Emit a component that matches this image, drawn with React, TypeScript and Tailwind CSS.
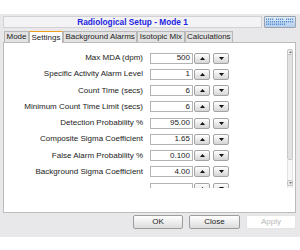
import React from 'react'

const rows = [
  { label: 'Max MDA (dpm)', value: '500' },
  { label: 'Specific Activity Alarm Level', value: '1' },
  { label: 'Count Time (secs)', value: '6' },
  { label: 'Minimum Count Time Limit (secs)', value: '6' },
  { label: 'Detection Probability %', value: '95.00' },
  { label: 'Composite Sigma Coefficient', value: '1.65' },
  { label: 'False Alarm Probability %', value: '0.100' },
  { label: 'Background Sigma Coefficient', value: '4.00' },
  { label: '', value: '' },
]

const tabs = ['Mode', 'Settings', 'Background Alarms', 'Isotopic Mix', 'Calculations']

function Arrow({ up }: { up?: boolean }) {
  return (
    <svg width="5" height="3" viewBox="0 0 5 3">
      <path d={up ? 'M0 3 L2.5 0 L5 3 Z' : 'M0 0 L2.5 3 L5 0 Z'} fill="#111" />
    </svg>
  )
}

function SpinButton({ up }: { up?: boolean }) {
  return (
    <div className="flex h-[11px] w-[16px] items-center justify-center rounded-[2px] border border-[#a4a4a4] bg-gradient-to-b from-white to-[#d6d6d6]">
      <Arrow up={up} />
    </div>
  )
}

function Row({ label, value }: { label: string; value: string }) {
  return (
    <div className="flex h-[16.25px] shrink-0 items-center">
      <div className="w-[139px] text-right leading-none">{label}</div>
      <div className="ml-[7px] flex h-[11px] w-[43px] items-center justify-end border border-[#b4b4b4] bg-white pr-[2px] leading-none">
        {value}
      </div>
      <div className="ml-[1px]">
        <SpinButton up />
      </div>
      <div className="ml-[3px]">
        <SpinButton />
      </div>
    </div>
  )
}

function Scrollbar() {
  return (
    <div className="mr-[2px] mt-[3px] flex h-[139px] w-[6px] flex-col">
      <div className="flex h-[6px] items-center justify-center rounded-t-[2px] border border-[#c4c4c4] bg-[#ececec]">
        <svg width="3" height="2" viewBox="0 0 3 2">
          <path d="M0 2 L1.5 0 L3 2 Z" fill="#777" />
        </svg>
      </div>
      <div className="h-[105px] rounded-b-[2px] border border-t-0 border-[#c8c8c8] bg-[#e2e2e2]" />
      <div className="flex-1 border-x border-[#e2e2e2] bg-[#f7f7f7]" />
      <div className="flex h-[6px] items-center justify-center rounded-[1px] border border-[#c4c4c4] bg-[#ececec]">
        <svg width="3" height="2" viewBox="0 0 3 2">
          <path d="M0 0 L1.5 2 L3 0 Z" fill="#777" />
        </svg>
      </div>
      <div className="h-[2px] border-x border-[#e2e2e2] bg-[#f7f7f7]" />
    </div>
  )
}

// little dotted badge in the title bar's corner
function Badge() {
  const dots = []
  for (let r = 0; r < 3; r++) {
    for (let c = 0; c < 14; c++) {
      if ((r === 2 && c > 9) || (r === 0 && c % 5 === 4)) continue
      dots.push(<rect key={r + '-' + c} x={1 + c * 2} y={1.5 + r * 2.5} width="1.2" height="1.5" fill="#5a8fd4" />)
    }
  }
  return (
    <svg width="30" height="10" viewBox="0 0 30 10" className="block">
      {dots}
    </svg>
  )
}

export default function App() {
  return (
    <div
      className="flex h-[250px] w-[300px] flex-col bg-white text-[8px] text-[#222]"
      style={{ fontFamily: '"Liberation Sans", Arial, sans-serif' }}
    >
      <div className="h-[14px] shrink-0" />

      <div className="flex h-[223px] shrink-0 flex-col bg-[#e8e8eb] pl-[3px] pr-[4px]">
        {/* title bar */}
        <div className="mt-[2px] flex h-[12px] items-stretch">
          <div className="flex flex-1 items-center justify-center border border-[#d2d2d6] bg-[#f3f3f5] text-[8.3px] font-bold text-[#2424e2]">
            Radiological Setup - Mode 1
          </div>
          <div className="ml-[2px] w-[32px] rounded-[1px] border border-[#9aa4b0] bg-gradient-to-b from-[#e2ecf8] to-[#b4cfee]">
            <Badge />
          </div>
        </div>

        {/* tabs */}
        <div className="mt-[3px] flex h-[11px] items-end pl-[1px]">
          {tabs.map((t) => (
            <div
              key={t}
              className={
                t === 'Settings'
                  ? 'relative z-10 -mb-px flex h-[12px] items-center border border-b-0 border-[#b8b8b8] border-t-[#f0a020] bg-white px-[1.5px] leading-none'
                  : 'flex h-[11px] items-center border border-b-0 border-[#b8b8b8] bg-[#e2e2e2] px-[1.5px] leading-none'
              }
            >
              {t}
            </div>
          ))}
        </div>

        {/* panel */}
        <div className="flex h-[171px] flex-col border border-[#bcbcbc] bg-white">
          <div className="mt-[3px] flex h-[142px]">
            <div className="flex flex-1 flex-col overflow-hidden pt-[3.9px]">
              {rows.map((r, i) => (
                <Row key={i} label={r.label} value={r.value} />
              ))}
            </div>
            <Scrollbar />
          </div>
        </div>

        {/* buttons */}
        <div className="mt-[2px] flex justify-end gap-[6px]">
          <div className="flex h-[14px] w-[50px] items-center justify-center rounded-[2px] border border-[#9c9c9c] bg-gradient-to-b from-white to-[#dcdcdc]">
            OK
          </div>
          <div className="flex h-[14px] w-[51px] items-center justify-center rounded-[2px] border border-[#9c9c9c] bg-gradient-to-b from-white to-[#dcdcdc]">
            Close
          </div>
          <div className="flex h-[14px] w-[50px] items-center justify-center rounded-[2px] border border-[#e4e4e4] bg-white text-[#b8b8b8]">
            Apply
          </div>
        </div>
      </div>
    </div>
  )
}
